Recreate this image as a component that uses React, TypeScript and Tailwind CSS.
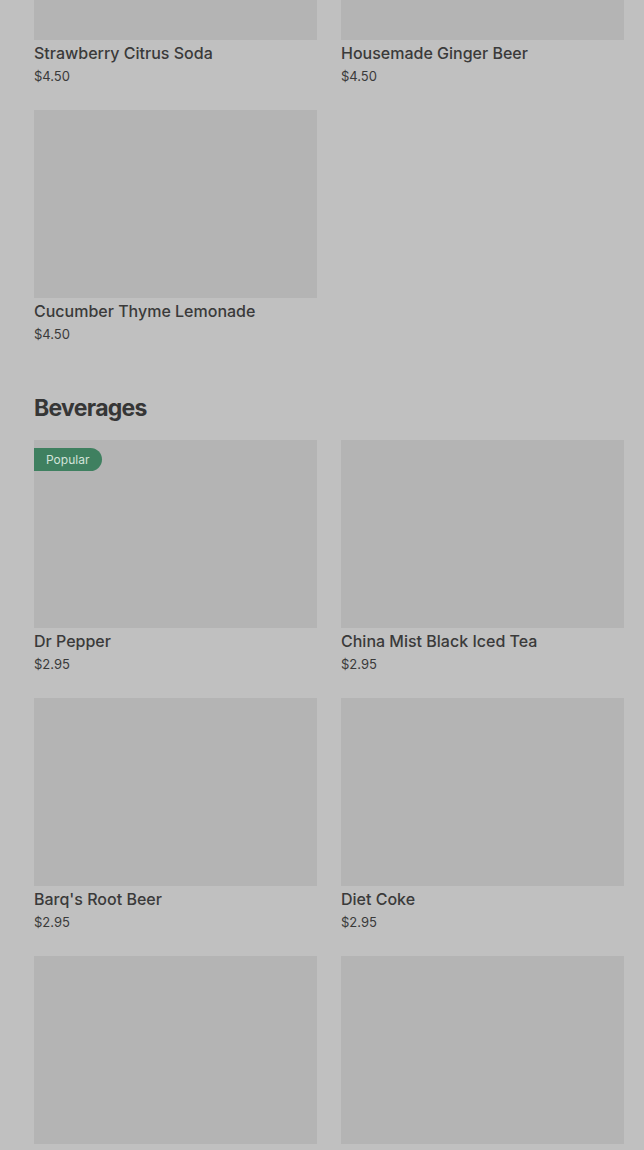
import React from "react";

interface Item {
  name: string;
  price: string;
  popular?: boolean;
}

const SODAS: Item[] = [
  { name: "Strawberry Citrus Soda", price: "$4.50" },
  { name: "Housemade Ginger Beer", price: "$4.50" },
  { name: "Cucumber Thyme Lemonade", price: "$4.50" },
];

const BEVERAGES: Item[] = [
  { name: "Dr Pepper", price: "$2.95", popular: true },
  { name: "China Mist Black Iced Tea", price: "$2.95" },
  { name: "Barq's Root Beer", price: "$2.95" },
  { name: "Diet Coke", price: "$2.95" },
  { name: "Sprite", price: "$2.95" },
  { name: "Coca-Cola", price: "$2.95" },
];

const ItemCard: React.FC<{ item: Item }> = ({ item }) => (
  <div className="flex flex-col pb-px">
    <div className="relative h-[188px] w-full bg-[#b4b4b4]">
      {item.popular && (
        <span className="absolute left-0 top-2 flex h-[23px] items-center rounded-r-full bg-[#3f8060] pl-3 pr-[13px] text-[12px] leading-none text-[#d3e3da]">
          Popular
        </span>
      )}
    </div>
    <h4 className="mt-[3px] text-[16px] font-medium leading-5 text-[#3a3a3a]">
      {item.name}
    </h4>
    <p className="mt-1 text-[13px] leading-[18px] text-[#3a3a3a]">{item.price}</p>
  </div>
);

const Section: React.FC<{ title?: string; items: Item[] }> = ({ title, items }) => (
  <section>
    {title && (
      <h3 className="mb-[16px] mt-[48px] text-[23px] font-bold leading-8 tracking-[-0.7px] text-[#363636]">
        {title}
      </h3>
    )}
    <div className="grid grid-cols-2 gap-6">
      {items.map((it) => (
        <ItemCard key={it.name} item={it} />
      ))}
    </div>
  </section>
);

export default function App() {
  return (
    <div
      className="h-[1150px] w-[644px] overflow-hidden bg-[#c0c0c0]"
      style={{ fontFamily: "Inter, 'Liberation Sans', sans-serif" }}
    >
      <div className="-mt-[148px] pl-[34px] pr-[20px]">
        <Section items={SODAS} />
        <Section title="Beverages" items={BEVERAGES} />
      </div>
    </div>
  );
}
